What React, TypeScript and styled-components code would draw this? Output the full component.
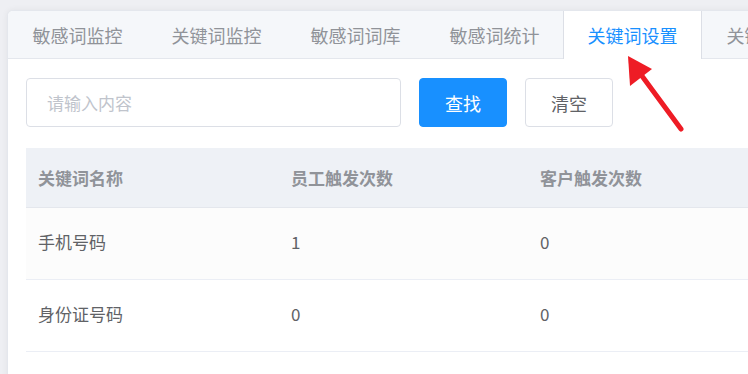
import styled, { createGlobalStyle } from "styled-components";
import { useState } from "react";

const GlobalStyle = createGlobalStyle`
  html, body {
    margin: 0;
    padding: 0;
    background: #eeeff3;
    font-family: "Noto Sans CJK SC", "Liberation Sans", sans-serif;
  }
`;

const Page = styled.div`
  width: 748px;
  height: 374px;
  overflow: hidden;
  padding: 10px 0 0 7px;
  box-sizing: border-box;
`;

const Card = styled.div`
  position: relative;
  width: 780px;
  height: 400px;
  background: #fff;
  border: 1px solid #e4e7ed;
  border-radius: 6px 0 0 0;
  box-shadow: 0 0 6px rgba(0, 0, 0, 0.06);
  box-sizing: border-box;
  overflow: hidden;
`;

const TabBar = styled.div`
  display: flex;
  height: 48px;
  background: #f5f7fa;
  border-bottom: 1px solid #e4e7ed;
  box-sizing: border-box;
`;

const Tab = styled.div<{ $active?: boolean }>`
  height: 48px;
  padding: 0 23.5px;
  margin-left: ${(p) => (p.$active ? "-1px" : "0")};
  display: flex;
  align-items: center;
  font-size: 18px;
  color: ${(p) => (p.$active ? "#1890ff" : "#909399")};
  background: ${(p) => (p.$active ? "#fff" : "transparent")};
  border-left: 1px solid ${(p) => (p.$active ? "#dcdfe6" : "transparent")};
  border-right: 1px solid ${(p) => (p.$active ? "#dcdfe6" : "transparent")};
  white-space: nowrap;
  box-sizing: border-box;
  cursor: pointer;
`;

const Body = styled.div`
  padding: 19px 18px;
`;

const SearchRow = styled.div`
  display: flex;
  gap: 18px;
  margin-bottom: 21px;
`;

const Input = styled.input`
  width: 375px;
  height: 49px;
  box-sizing: border-box;
  border: 1px solid #dcdfe6;
  border-radius: 4px;
  padding: 0 20px;
  font-size: 17px;
  font-family: inherit;
  color: #606266;
  outline: none;

  &::placeholder {
    color: #c0c4cc;
  }
`;

const Button = styled.button<{ $primary?: boolean }>`
  width: 88px;
  height: 49px;
  border-radius: 4px;
  font-size: 18px;
  font-family: inherit;
  cursor: pointer;
  color: ${(p) => (p.$primary ? "#fff" : "#606266")};
  background: ${(p) => (p.$primary ? "#1890ff" : "#fff")};
  border: 1px solid ${(p) => (p.$primary ? "#1890ff" : "#dcdfe6")};
`;

const Table = styled.table`
  width: 760px;
  border-collapse: collapse;
  table-layout: fixed;
  font-size: 17px;
`;

const Th = styled.th<{ $w?: number }>`
  box-sizing: border-box;
  width: ${(p) => (p.$w ? `${p.$w}px` : "auto")};
  height: 59px;
  padding: 0 12px;
  text-align: left;
  font-weight: bold;
  color: #909399;
  background: #eef1f6;
  border-bottom: 1px solid #e4e7ed;
`;

const Tr = styled.tr<{ $shade?: boolean }>`
  background: ${(p) => (p.$shade ? "#fcfcfc" : "#fff")};
`;

const Td = styled.td`
  height: 67px;
  padding: 0 12px 4px;
  color: #606266;
  border-bottom: 1px solid #ebeef5;
`;

const Arrow = styled.svg`
  position: absolute;
  left: 610px;
  top: 40px;
  pointer-events: none;
`;

const tabs = ["敏感词监控", "关键词监控", "敏感词词库", "敏感词统计", "关键词设置", "关键词统计"];

const rows = [
  { name: "手机号码", staff: 1, customer: 0 },
  { name: "身份证号码", staff: 0, customer: 0 },
];

const App = () => {
  const [active, setActive] = useState<number>(4);
  const [keyword, setKeyword] = useState<string>("");

  return (
    <Page>
      <GlobalStyle />
      <Card>
        <TabBar>
          {tabs.map((t, i) => (
            <Tab key={t} $active={i === active} onClick={() => setActive(i)}>
              {t}
            </Tab>
          ))}
        </TabBar>
        <Body>
          <SearchRow>
            <Input
              placeholder="请输入内容"
              value={keyword}
              onChange={(e) => setKeyword(e.target.value)}
            />
            <Button $primary>查找</Button>
            <Button onClick={() => setKeyword("")}>清空</Button>
          </SearchRow>
          <Table>
            <thead>
              <tr>
                <Th $w={253}>关键词名称</Th>
                <Th $w={249}>员工触发次数</Th>
                <Th>客户触发次数</Th>
              </tr>
            </thead>
            <tbody>
              {rows.map((r, i) => (
                <Tr key={r.name} $shade={i === 0}>
                  <Td>{r.name}</Td>
                  <Td>{r.staff}</Td>
                  <Td>{r.customer}</Td>
                </Tr>
              ))}
              <Tr>
                <Td />
                <Td />
                <Td />
              </Tr>
            </tbody>
          </Table>
        </Body>
        <Arrow width="90" height="100" viewBox="0 0 90 100">
          <line x1="63" y1="78" x2="24" y2="25" stroke="#ee1c25" strokeWidth="5" strokeLinecap="round" />
          <polygon points="10,5 12,35 34,18" fill="#ee1c25" />
        </Arrow>
      </Card>
    </Page>
  );
};

export default App;
